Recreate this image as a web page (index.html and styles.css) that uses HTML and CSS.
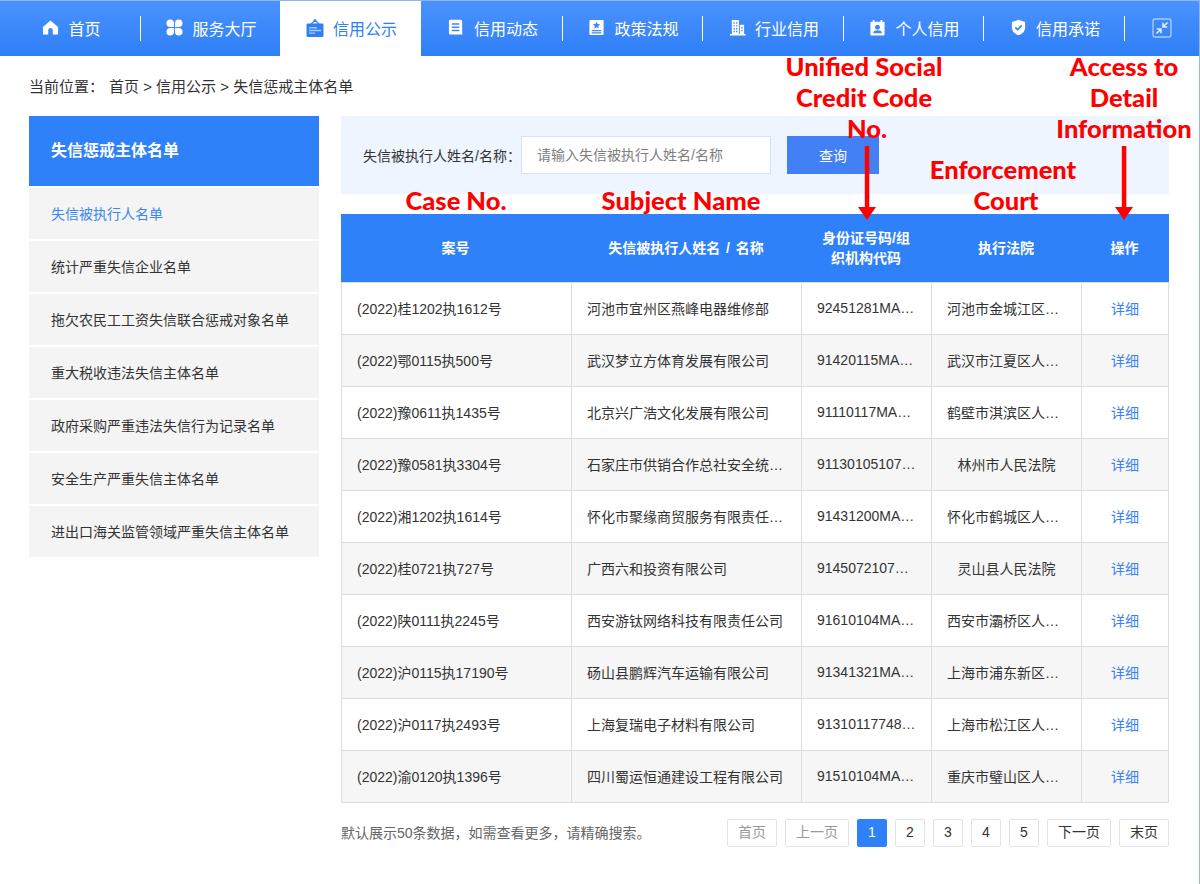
FILE: index.html
```html
<!DOCTYPE html>
<html lang="zh-CN">
<head>
<meta charset="utf-8">
<title>失信惩戒主体名单</title>
<link rel="stylesheet" href="styles.css">
</head>
<body>
<div class="page">
  <nav class="nav">
    <a class="nav-item">
      <svg class="ico" viewBox="0 0 18 18"><path fill="#fff" d="M9 1.500 17 8.600V16.500H11.400V12a2.400 2.400 0 0 0-4.800 0v4.500H1V8.600Z"/></svg>首页</a>
    <a class="nav-item">
      <svg class="ico" viewBox="0 0 18 18"><g fill="#fff"><path d="M4.500.5A4 4 0 0 1 8.500 4.500V8.500H4.500A4 4 0 0 1 4.500.5Z"/><path d="M13.500.5A4 4 0 0 0 9.500 4.500V8.500H13.500A4 4 0 0 0 13.500.5Z"/><path d="M4.500 17.500A4 4 0 0 0 8.500 13.500V9.500H4.500A4 4 0 0 0 4.500 17.500Z"/><path d="M13.500 17.500A4 4 0 0 1 9.500 13.500V9.500H13.500A4 4 0 0 1 13.500 17.500Z"/></g></svg>服务大厅</a>
    <a class="nav-item active">
      <svg class="ico" viewBox="0 0 18 18"><path fill="none" stroke="#2f7ff5" stroke-width="1.300" d="M5 5 9 1.500 13 5"/><circle fill="#2f7ff5" cx="9" cy="1.600" r="1.400"/><rect fill="#2f7ff5" x=".5" y="4.500" width="17" height="13.500" rx="1.200"/><path fill="#a9c9fb" d="M3 8h8v1.500H3ZM3 10.800h12v1.500H3ZM3 13.500h6v1.300H3Z"/></svg>信用公示</a>
    <a class="nav-item">
      <svg class="ico" viewBox="0 0 18 18"><path fill="#fff" d="M2.500.8h11a1.500 1.500 0 0 1 1.500 1.500V15a1.500 1.500 0 0 0 1.500 1.500H2.500A1.500 1.500 0 0 1 1 15V2.300A1.500 1.500 0 0 1 2.500.8Z"/><path fill="#3f88f8" d="M4 4.500h8V6H4ZM4 8h8v1.500H4ZM4 11.500h8V13H4Z"/></svg>信用动态</a>
    <a class="nav-item">
      <svg class="ico" viewBox="0 0 18 18"><path fill="#fff" d="M2.500 1h13a1 1 0 0 1 1 1v14a1 1 0 0 1-1 1h-13a1 1 0 0 1-1-1V2a1 1 0 0 1 1-1Z"/><path fill="#3f88f8" d="m9 2.800 1.200 2.500 2.700.3-2 1.800.5 2.700L9 8.800l-2.400 1.300.5-2.700-2-1.800 2.700-.3ZM4 11.700h10v1.400H4ZM4 14.100h10v1.200H4Z"/></svg>政策法规</a>
    <a class="nav-item">
      <svg class="ico" viewBox="0 0 18 18"><path fill="#fff" d="M3 1h7.500v15H3ZM11.500 6H16v10h-4.500ZM1 16h16.500v1.500H1Z"/><path fill="#3f88f8" d="M4.800 3.500h1.400v1.500H4.800ZM7.400 3.500h1.400v1.500H7.400ZM4.800 6.500h1.400V8H4.800ZM7.400 6.500h1.400V8H7.400ZM4.800 9.500h1.400V11H4.800ZM7.400 9.500h1.400V11H7.400ZM4.800 12.500h1.400V14H4.800ZM7.400 12.500h1.400V14H7.400ZM13 8.500h1.400V10H13ZM13 11.500h1.400V13H13Z"/></svg>行业信用</a>
    <a class="nav-item">
      <svg class="ico" viewBox="0 0 18 18"><path fill="#fff" d="M4 1h1.800v2h6.400V1H14v2h1.500a1 1 0 0 1 1 1v12.500a1 1 0 0 1-1 1h-13a1 1 0 0 1-1-1V4a1 1 0 0 1 1-1H4Z"/><circle fill="#3f88f8" cx="9" cy="8.700" r="2.600"/><path fill="#3f88f8" d="M4.500 15c0-2.300 2-3 4.500-3s4.500.7 4.500 3Z"/></svg>个人信用</a>
    <a class="nav-item">
      <svg class="ico" viewBox="0 0 18 18"><path fill="#fff" d="M9 .8 16 3.200V9c0 4-3 6.800-7 8.300C5 15.800 2 13 2 9V3.200Z"/><path fill="none" stroke="#3f88f8" stroke-width="1.800" d="m5.600 8.800 2.500 2.500 4.300-4.500"/></svg>信用承诺</a>
    <a class="nav-expand">
      <svg class="ico-expand" viewBox="0 0 20 20"><rect x="1" y="1" width="18" height="18" rx="2" fill="none" stroke="#a9cbfc" stroke-width="1.400"/><path fill="none" stroke="#e3eeff" stroke-width="1.500" d="M15.500 4.500 11 9M11 4.800V9h4.200M4.500 15.500 9 11M4.800 11H9v4.200"/></svg>
    </a>
  </nav>

  <div class="crumb"><span class="crumb-label">当前位置：</span>首页 &gt; 信用公示 &gt; 失信惩戒主体名单</div>

  <div class="layout">
    <aside class="side">
      <h2 class="side-head">失信惩戒主体名单</h2>
      <a class="side-item current">失信被执行人名单</a>
      <a class="side-item">统计严重失信企业名单</a>
      <a class="side-item">拖欠农民工工资失信联合惩戒对象名单</a>
      <a class="side-item">重大税收违法失信主体名单</a>
      <a class="side-item">政府采购严重违法失信行为记录名单</a>
      <a class="side-item">安全生产严重失信主体名单</a>
      <a class="side-item">进出口海关监管领域严重失信主体名单</a>
    </aside>

    <main class="main">
      <form class="search">
        <label class="search-label">失信被执行人姓名/名称：</label>
        <input class="search-input" placeholder="请输入失信被执行人姓名/名称">
        <button class="search-btn" type="button">查询</button>
      </form>

      <table class="grid">
        <colgroup><col class="c1"><col class="c2"><col class="c3"><col class="c4"><col class="c5"></colgroup>
        <thead>
          <tr><th>案号</th><th>失信被执行人姓名 / 名称</th><th>身份证号码/组织机构代码</th><th>执行法院</th><th>操作</th></tr>
        </thead>
        <tbody>
          <tr><td>(2022)桂1202执1612号</td><td>河池市宜州区燕峰电器维修部</td><td>92451281MA…</td><td>河池市金城江区…</td><td class="ctr"><a class="link">详细</a></td></tr>
          <tr><td>(2022)鄂0115执500号</td><td>武汉梦立方体育发展有限公司</td><td>91420115MA…</td><td>武汉市江夏区人…</td><td class="ctr"><a class="link">详细</a></td></tr>
          <tr><td>(2022)豫0611执1435号</td><td>北京兴广浩文化发展有限公司</td><td>91110117MA…</td><td>鹤壁市淇滨区人…</td><td class="ctr"><a class="link">详细</a></td></tr>
          <tr><td>(2022)豫0581执3304号</td><td>石家庄市供销合作总社安全统…</td><td>91130105107…</td><td class="ctr">林州市人民法院</td><td class="ctr"><a class="link">详细</a></td></tr>
          <tr><td>(2022)湘1202执1614号</td><td>怀化市聚缘商贸服务有限责任…</td><td>91431200MA…</td><td>怀化市鹤城区人…</td><td class="ctr"><a class="link">详细</a></td></tr>
          <tr><td>(2022)桂0721执727号</td><td>广西六和投资有限公司</td><td>9145072107…</td><td class="ctr">灵山县人民法院</td><td class="ctr"><a class="link">详细</a></td></tr>
          <tr><td>(2022)陕0111执2245号</td><td>西安游钛网络科技有限责任公司</td><td>91610104MA…</td><td>西安市灞桥区人…</td><td class="ctr"><a class="link">详细</a></td></tr>
          <tr><td>(2022)沪0115执17190号</td><td>砀山县鹏辉汽车运输有限公司</td><td>91341321MA…</td><td>上海市浦东新区…</td><td class="ctr"><a class="link">详细</a></td></tr>
          <tr><td>(2022)沪0117执2493号</td><td>上海复瑞电子材料有限公司</td><td>91310117748…</td><td>上海市松江区人…</td><td class="ctr"><a class="link">详细</a></td></tr>
          <tr><td>(2022)渝0120执1396号</td><td>四川蜀运恒通建设工程有限公司</td><td>91510104MA…</td><td>重庆市璧山区人…</td><td class="ctr"><a class="link">详细</a></td></tr>
        </tbody>
      </table>

      <div class="foot">
        <span class="foot-note">默认展示50条数据，如需查看更多，请精确搜索。</span>
        <div class="pager">
          <a class="pg off">首页</a><a class="pg off">上一页</a><a class="pg num on">1</a><a class="pg num">2</a><a class="pg num">3</a><a class="pg num">4</a><a class="pg num">5</a><a class="pg">下一页</a><a class="pg">末页</a>
        </div>
      </div>
    </main>
  </div>

  <div class="note note-case">Case No.</div>
  <div class="note note-name">Subject Name</div>
  <div class="note note-code">Unified Social<br>Credit Code<br><span class="note-nudge">No.</span></div>
  <div class="note note-court">Enforcement<br><span class="note-nudge">Court</span></div>
  <div class="note note-detail">Access to<br>Detail<br>Information</div>
  <svg class="arrow arrow-code" viewBox="0 0 20 76"><path fill="#f00" d="M7.800 0h4.500v61H19L10 74 1 61h6.800Z"/></svg>
  <svg class="arrow arrow-detail" viewBox="0 0 20 76"><path fill="#f00" d="M7.800 0h4.500v61H19L10 74 1 61h6.800Z"/></svg>
</div>
</body>
</html>
```

FILE: styles.css
```css
* { box-sizing: border-box; }
html, body { margin: 0; padding: 0; background: #fff; }
body {
  font-family: "Liberation Sans", "Noto Sans CJK SC", sans-serif;
  font-size: 14px;
  color: #333;
}
.page {
  position: relative;
  width: 1200px;
  height: 884px;
  overflow: hidden;
  border-right: 1px solid #8db7f7;
}
.nav {
  display: flex;
  height: 56px;
  border-top: 1px solid #8db7f7;
  background: linear-gradient(#4a92ff, #2f7ff6);
}
.nav-item {
  position: relative;
  flex: 0 0 140px;
  display: flex;
  align-items: center;
  justify-content: center;
  gap: 9px;
  padding: 0 0 2px 3px;
  font-size: 16px;
  color: #fff;
}
.nav-item:nth-child(3),
.nav-item:nth-child(4),
.nav-item:nth-child(6),
.nav-item:nth-child(8) { flex-basis: 141px; }
.nav-item::after {
  content: "";
  position: absolute;
  right: -1px;
  top: 15px;
  height: 25px;
  width: 1px;
  background: #fff;
}
.nav-item:nth-child(2)::after,
.nav-item:nth-child(3)::after { display: none; }
.nav-item.active { padding-left: 2px; background: #fff; color: #2f7ff6; }
.ico { width: 17px; height: 17px; flex: none; }
.active .ico { width: 18px; height: 18px; }
.nav-expand { flex: 1; display: flex; align-items: center; justify-content: center; padding-bottom: 2px; }
.ico-expand { width: 20px; height: 20px; }
.crumb {
  padding: 21px 0 0 29px;
  height: 60px;
  line-height: 20px;
  font-size: 15px;
  color: #333;
}
.crumb-label { margin-right: 5px; }
.layout {
  display: flex;
  gap: 22px;
  padding-left: 29px;
}
.side { width: 290px; flex: none; }
.side-head {
  margin: 0 0 2px;
  height: 70px;
  padding-left: 22px;
  line-height: 70px;
  font-size: 16px;
  font-weight: bold;
  color: #fff;
  background: #2e81f9;
}
.side-item {
  display: block;
  height: 51px;
  margin-bottom: 2px;
  padding: 1px 0 0 22px;
  line-height: 51px;
  background: #f4f4f4;
  color: #333;
}
.side-item.current { color: #3b86f6; }
.main { width: 828px; flex: none; }
.search {
  display: flex;
  align-items: center;
  height: 78px;
  padding-left: 22px;
  background: #eef5ff;
  color: #333;
}
.search-label { width: 158px; flex: none; }
.search-input {
  width: 250px;
  height: 38px;
  padding: 0 15px;
  border: 1px solid #d5e2f5;
  background: #fff;
  font: inherit;
  outline: none;
}
.search-input::placeholder { color: #808080; opacity: 1; }
.search-btn {
  width: 92px;
  height: 38px;
  margin-left: 16px;
  border: 0;
  background: #4380f5;
  color: #fff;
  font: inherit;
}
.grid {
  width: 828px;
  margin-top: 20px;
  border-collapse: separate;
  border-spacing: 0;
  table-layout: fixed;
}
.c1 { width: 231px; }
.c2 { width: 230px; }
.c3 { width: 130px; }
.c4 { width: 150px; }
.c5 { width: 87px; }
.grid th {
  height: 68px;
  padding: 0 16px 0 14px;
  background: #2e81f9;
  color: #fff;
  font-size: 14px;
  font-weight: bold;
  line-height: 20px;
  word-spacing: 2px;
  text-align: center;
}
.grid td {
  height: 52px;
  padding: 0 0 2px 15px;
  border-right: 1px solid #ddd;
  border-bottom: 1px solid #ddd;
  white-space: nowrap;
  color: #333;
  background: #fff;
}
.grid td:first-child { border-left: 1px solid #ddd; }
.grid tbody tr:first-child td { height: 53px; border-top: 1px solid #ddd; }
.grid tbody tr:nth-child(even) td { background: #f6f6f6; }
.grid td.ctr { padding: 0 0 2px; text-align: center; }
.link { color: #3b82f0; }
.foot {
  display: flex;
  align-items: center;
  justify-content: space-between;
  margin-top: 16px;
}
.foot-note { padding-bottom: 2px; color: #666; font-size: 14px; }
.pager { display: flex; gap: 8px; }
.pg {
  height: 28px;
  padding: 0 10px;
  border: 1px solid #e3e3e3;
  border-radius: 2px;
  line-height: 24px;
  font-size: 14px;
  text-align: center;
  color: #333;
}
.pg:first-child,
.pg:last-child { width: 50px; padding: 0; }
.pg.num { width: 30px; padding: 0; }
.pg.off { color: #999; }
.pg.on { background: #2e81f9; border-color: #2e81f9; color: #fff; }
.note {
  position: absolute;
  font-family: "Lato", "Liberation Sans", sans-serif;
  font-size: 25.5px;
  font-weight: 900;
  line-height: 31px;
  color: #f00;
  text-align: center;
  white-space: nowrap;
  transform: translateX(-50%);
}
.note-nudge { padding-left: 6px; }
.note-case { left: 456px; top: 185px; }
.note-name { left: 681px; top: 185px; }
.note-code { left: 864px; top: 51px; }
.note-court { left: 1003px; top: 154px; }
.note-detail { left: 1124px; top: 51px; }
.arrow { position: absolute; top: 146px; width: 20px; height: 76px; }
.arrow-code { left: 857px; }
.arrow-detail { left: 1114px; }
```
